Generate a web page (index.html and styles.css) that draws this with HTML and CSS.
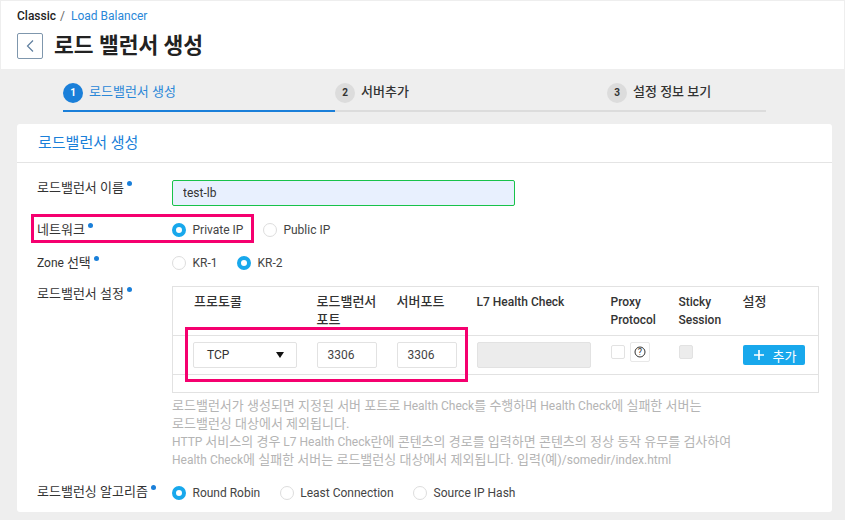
FILE: index.html
```html
<!DOCTYPE html>
<html lang="ko">
<head>
<meta charset="utf-8">
<title>로드 밸런서 생성</title>
<link rel="stylesheet" href="styles.css">
</head>
<body>
<header class="page-head">
  <div class="crumbs"><b>Classic</b><span class="sep">/</span><a class="crumb-link">Load Balancer</a></div>
  <div class="title-row">
    <button class="back" type="button" aria-label="back">
      <svg width="10" height="14" viewBox="0 0 10 14"><path d="M8 1.5 2.5 7 8 12.5" fill="none" stroke="#5f7f9f" stroke-width="1.2"/></svg>
    </button>
    <h1>로드 밸런서 생성</h1>
  </div>
</header>

<nav class="steps">
  <div class="step step-a active"><span class="num">1</span><span>로드밸런서 생성</span></div>
  <div class="step step-a"><span class="num">2</span><span>서버추가</span></div>
  <div class="step step-b"><span class="num">3</span><span>설정 정보 보기</span></div>
</nav>

<main class="card">
  <h2>로드밸런서 생성</h2>
  <div class="form">
    <div class="row row-name">
      <label class="lbl"><span class="ko">로드밸런서 이름</span><i></i></label>
      <input class="name-input" value="test-lb">
    </div>
    <div class="row row-net">
      <label class="lbl"><span class="ko">네트워크</span><i></i></label>
      <div class="radios">
        <span class="radio on">Private IP</span>
        <span class="radio">Public IP</span>
      </div>
    </div>
    <div class="row row-zone">
      <label class="lbl">Zone <span class="ko">선택</span><i></i></label>
      <div class="radios">
        <span class="radio">KR-1</span>
        <span class="radio on">KR-2</span>
      </div>
    </div>
    <div class="row row-set">
      <label class="lbl"><span class="ko">로드밸런서 설정</span><i></i></label>
      <div class="set-body">
        <table class="tbl">
          <colgroup>
            <col class="c1"><col class="c2"><col class="c3"><col class="c4"><col class="c5"><col class="c6"><col class="c7">
          </colgroup>
          <thead>
            <tr>
              <th class="pl"><span class="ko">프로토콜</span></th>
              <th><span class="ko">로드밸런서<br>포트</span></th>
              <th><span class="ko">서버포트</span></th>
              <th>L7 Health Check</th>
              <th>Proxy<br>Protocol</th>
              <th>Sticky<br>Session</th>
              <th><span class="ko">설정</span></th>
            </tr>
          </thead>
          <tbody>
            <tr class="data">
              <td class="pl-s"><div class="sel">TCP<em></em></div></td>
              <td><div class="box">3306</div></td>
              <td><div class="box">3306</div></td>
              <td><div class="box dis wide"></div></td>
              <td><div class="proxy"><span class="chk"></span><span class="help">
                <svg width="14" height="14" viewBox="0 0 14 14"><circle cx="7" cy="7" r="5" fill="none" stroke="#333" stroke-width="1"/><text x="7" y="10" text-anchor="middle" class="q">?</text></svg>
              </span></div></td>
              <td><span class="chk dis"></span></td>
              <td><button class="add" type="button"><svg width="12" height="12" viewBox="0 0 12 12"><path d="M6 1v10M1 6h10" stroke="#fff" stroke-width="1.6"/></svg><span class="ko">추가</span></button></td>
            </tr>
            <tr class="empty"><td colspan="7"></td></tr>
          </tbody>
        </table>
        <p class="hint"><span class="ko">로드밸런서가 생성되면 지정된 서버 포트로</span> Health Check<span class="ko">를 수행하며</span> Health Check<span class="ko">에 실패한 서버는</span><br><span class="ko">로드밸런싱 대상에서 제외됩니다.</span><br>HTTP <span class="ko">서비스의 경우</span> L7 Health Check<span class="ko">란에 콘텐츠의 경로를 입력하면 콘텐츠의 정상 동작 유무를 검사하여</span><br>Health Check<span class="ko">에 실패한 서버는 로드밸런싱 대상에서 제외됩니다. 입력(예)</span>/somedir/index.html</p>
      </div>
    </div>
    <div class="row row-algo">
      <label class="lbl"><span class="ko">로드밸런싱 알고리즘</span><i></i></label>
      <div class="radios">
        <span class="radio on">Round Robin</span>
        <span class="radio">Least Connection</span>
        <span class="radio">Source IP Hash</span>
      </div>
    </div>
  </div>
</main>

<div class="mark mark-net"></div>
<div class="mark mark-port"></div>
</body>
</html>
```

FILE: styles.css
```css
*, *::before, *::after { box-sizing: border-box; }
html, body { margin: 0; height: 520px; overflow: hidden; }
body {
  position: relative;
  background: #eeeeee;
  padding-top: 1px;
  font-family: Roboto, "Noto Sans CJK KR", sans-serif;
  font-size: 12px;
  color: #333;
}
.ko { font-size: 13px; }
.page-head {
  height: 68px;
  margin: 0 1px;
  padding: 8px 16px 0;
  background: #fff;
}
.crumbs { height: 15px; line-height: 15px; font-size: 12px; color: #222; }
.crumbs b { font-weight: 500; }
.sep { margin: 0 6px 0 4px; color: #666; }
.crumb-link { color: #2a87d8; }
.title-row { display: flex; align-items: center; margin-top: 9px; height: 26px; }
.back {
  width: 26px; height: 26px; padding: 0;
  display: flex; align-items: center; justify-content: center;
  background: #fff; border: 1px solid #7f97ad; border-radius: 2px;
}
h1 { margin: 0 0 0 11px; font-size: 21.5px; font-weight: 700; color: #222; line-height: 26px; }
.steps { display: flex; margin: 12px 0 0 63px; width: 703px; height: 31px; }
.step {
  display: flex; align-items: flex-start; gap: 6px;
  border-bottom: 2px solid #dcdcdc;
  padding-top: 2px;
  font-size: 13px; font-weight: 500; color: #333; line-height: 18px;
}
.step-a { width: 272px; }
.step-b { width: 159px; }
.num {
  width: 20px; height: 20px; border-radius: 50%;
  background: #dcdcdc; color: #333;
  font-size: 10px; font-weight: 700; line-height: 20px; text-align: center;
}
.active { border-bottom-color: #1a7fd9; color: #2a87d8; font-weight: 400; }
.active .num { background: #1a7fd9; color: #fff; }
.card {
  width: 815px; height: 388px; margin: 12px 0 0 17px;
  background: #fff; border-radius: 3px;
}
h2 {
  margin: 0; height: 39px; padding-left: 21px;
  font-size: 15px; font-weight: 400; line-height: 39px; color: #1a7fd9;
  border-bottom: 1px solid #e4e4e4;
}
.form { padding: 17px 0 0 20px; }
.row { display: flex; }
.lbl {
  width: 135px; flex: none;
  font-size: 12px; line-height: 16px; color: #333;
}
.lbl i {
  display: inline-block; width: 5px; height: 5px; margin-left: 3px;
  vertical-align: 6px;
  border-radius: 50%; background: #1a7fd9;
}
.row-name { height: 40px; }
.name-input {
  width: 343px; height: 26px; padding: 0 10px;
  font: 12px Roboto, sans-serif; color: #333;
  background: #e8f0fe; border: 1px solid #18c24a; border-radius: 2px;
  outline: 0;
}
.row-net { height: 34px; padding-top: 1px; align-items: flex-start; }
.row-net .lbl, .row-zone .lbl { padding-top: 1px; }
.row-zone { height: 32px; }
.radios { display: flex; height: 16px; line-height: 16px; color: #444; }
.radio {
  display: flex; align-items: center; gap: 6.5px; margin-right: 19.5px; height: 18px;
}
.radio::before {
  content: ""; width: 14px; height: 14px; border-radius: 50%;
  background: #fff; border: 1px solid #ddd; flex: none;
}
.radio.on::before { border: 4px solid #18a8ec; }
.row-set { height: 198px; }
.tbl {
  width: 646px; height: 107px; table-layout: fixed;
  border-collapse: collapse; border: 1px solid #e2e2e2;
}
.c1 { width: 144px; } .c2 { width: 80px; } .c3 { width: 80px; }
.c4 { width: 134px; } .c5 { width: 68px; } .c6 { width: 64px; } .c7 { width: 76px; }
th {
  height: 49px; padding: 6px 0 0; vertical-align: top; text-align: left;
  font-size: 12px; font-weight: 500; line-height: 18px; color: #333;
}
th.pl { padding-left: 21px; }
td { padding: 6px 0 0; vertical-align: top; }
td.pl-s { padding-left: 20px; }
.data td { height: 39px; border-top: 1px solid #e2e2e2; border-bottom: 1px solid #e2e2e2; }
.empty td { height: 18px; padding: 0; }
.sel {
  position: relative;
  width: 104px; height: 26px; padding-left: 13px; line-height: 24px;
  border: 1px solid #e2e2e2; border-radius: 2px; color: #333;
}
.sel em {
  position: absolute; right: 12px; top: 9px; width: 0; height: 0;
  border-left: 4px solid transparent; border-right: 4px solid transparent;
  border-top: 6px solid #111;
}
.box {
  width: 60px; height: 26px; padding-left: 10px; line-height: 24px;
  border: 1px solid #e2e2e2; border-radius: 2px; color: #444;
}
.box.wide { width: 114px; }
.box.dis { background: #ececec; }
.proxy { display: flex; align-items: flex-start; gap: 5px; }
.chk {
  display: block; width: 14px; height: 14px; margin-top: 3px;
  border: 1px solid #e2e2e2; border-radius: 2px; background: #fff;
}
.chk.dis { background: #ececec; }
.help {
  display: flex; align-items: center; justify-content: center;
  width: 20px; height: 20px;
  border: 1px solid #e8e8e8; border-radius: 2px;
}
.q { font: 9px Roboto, sans-serif; fill: #333; }
.add {
  display: flex; align-items: center; gap: 8px;
  width: 62px; height: 20px; margin-top: 3px; padding: 0 0 0 10px;
  background: #18a8ec; border: 0; border-radius: 2px;
  font: 12px Roboto, "Noto Sans CJK KR", sans-serif; color: #fff;
}
.hint {
  margin: 4px 0 0; font-size: 12px; line-height: 18px; color: #b4b4b4;
  white-space: nowrap;
}
.row-algo { height: 24px; }
.mark { position: absolute; border: 3px solid #f5006f; pointer-events: none; }
.mark-net { left: 31px; top: 214px; width: 223px; height: 29px; }
.mark-port { left: 185px; top: 327px; width: 283px; height: 55px; }
```
